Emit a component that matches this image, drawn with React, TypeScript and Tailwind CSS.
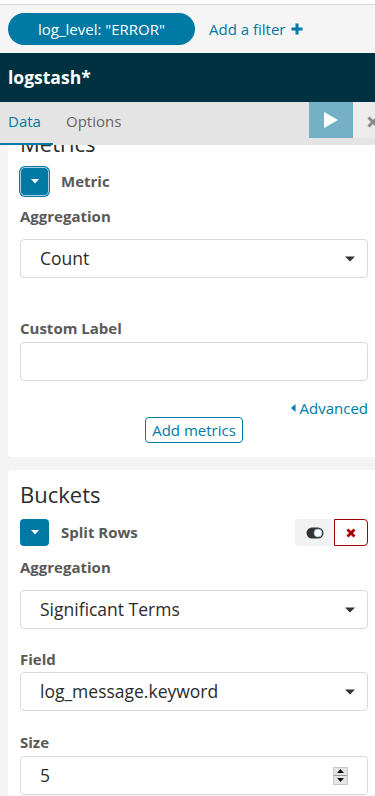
import React from "react";

const Caret = ({ color = "#ffffff" }: { color?: string }) => (
  <svg width="10" height="6" viewBox="0 0 10 6">
    <polygon points="0,0.5 10,0.5 5,5.5" fill={color} />
  </svg>
);

const SelectBox = ({ value }: { value: string }) => (
  <div className="h-[39px] w-[348px] rounded-[4px] border border-[#d9d9d9] bg-white flex items-center pl-[19px] pr-[12px]">
    <span className="flex-1 text-[17.5px] text-[#2b2b2b]">{value}</span>
    <Caret color="#333333" />
  </div>
);

const Label = ({ children }: { children: React.ReactNode }) => (
  <div className="h-[20px] leading-[20px] text-[15px] font-bold text-[#595959]">{children}</div>
);

export default function App() {
  return (
    <div className="w-[375px] h-[796px] overflow-hidden bg-[#f4f4f4] font-['Open_Sans',sans-serif] flex flex-col">
      {/* top strip */}
      <div className="h-[5px] bg-white border-b border-[#d9d9d9] shrink-0" />
      {/* filter bar */}
      <div className="h-[48px] bg-[#f5f5f5] flex items-center pl-[8px] shrink-0">
        <div className="h-[32px] w-[187px] rounded-full bg-[#0079a5] text-white text-[15px] flex items-center justify-center">
          log_level: "ERROR"
        </div>
        <div className="ml-[14px] text-[15px] text-[#0079a5] flex items-center gap-[5px]">
          Add a filter
          <svg width="12" height="12" viewBox="0 0 12 12">
            <path d="M6 0.5v11M0.5 6h11" stroke="#0079a5" strokeWidth="3" />
          </svg>
        </div>
      </div>
      {/* index pattern bar */}
      <div className="h-[49px] bg-[#003140] flex items-center pl-[8px] text-white text-[17.5px] font-bold shrink-0">
        logstash*
      </div>
      {/* tabs */}
      <div className="h-[43px] bg-[#e4e4e4] flex shrink-0 relative">
        <div className="w-[53px] h-full flex items-center pl-[8px] text-[15px] text-[#0079a5] border-b-[2px] border-[#0079a5] pb-[2px]">
          Data
        </div>
        <div className="ml-[13px] h-full flex items-center text-[15px] text-[#666666] pb-[4px]">Options</div>
        <div className="flex-1" />
        <div className="self-start h-[36px] w-[44px] bg-[#75b0c6] flex items-center justify-center">
          <svg width="14" height="16" viewBox="0 0 14 16">
            <polygon points="0,0 14,8 0,16" fill="#ffffff" />
          </svg>
        </div>
        <div className="self-start h-[36px] w-[22px] bg-[#ececec] relative overflow-hidden">
          <svg className="absolute left-[14px] top-[14px]" width="12" height="12" viewBox="0 0 12 12">
            <path d="M1.5 1.5l9 9M10.5 1.5l-9 9" stroke="#888888" strokeWidth="3" />
          </svg>
        </div>
      </div>
      {/* content */}
      <div className="flex-1 overflow-hidden pl-[8px] flex flex-col">
        {/* metrics panel */}
        <div className="bg-white rounded-bl-[4px] pl-[12px] pb-[14px] flex flex-col shrink-0">
          <div className="-mt-[15px] text-[22px] leading-[26px] text-[#2b2b2b]">Metrics</div>
          <div className="mt-[10px] h-[31px] flex items-center">
            <div className="-ml-[1px] w-[31px] h-[31px] rounded-[6px] bg-[#0079a5] p-[1px]">
              <div className="w-full h-full rounded-[5px] border border-[#a9d0e2] bg-[#0079a5] flex items-center justify-center">
                <svg width="8" height="5" viewBox="0 0 8 5">
                  <polygon points="0,0 8,0 4,4.5" fill="#ffffff" />
                </svg>
              </div>
            </div>
            <div className="ml-[11px] text-[15px] font-bold text-[#595959]">Metric</div>
          </div>
          <div className="mt-[9px]">
            <Label>Aggregation</Label>
          </div>
          <div className="mt-[13px]">
            <SelectBox value="Count" />
          </div>
          <div className="mt-[40px]">
            <Label>Custom Label</Label>
          </div>
          <div className="mt-[4px] h-[39px] w-[348px] rounded-[4px] border border-[#d9d9d9] bg-white" />
          <div className="mt-[17px] h-[19px] w-[348px] flex items-center justify-end text-[15px] leading-[20px] text-[#0079a5]">
            <svg width="5" height="8" viewBox="0 0 5 8" className="mr-[4px]">
              <polygon points="4.5,0 4.5,8 0,4" fill="#0079a5" />
            </svg>
            Advanced
          </div>
          <div className="w-[348px] flex justify-center">
            <div className="h-[26px] w-[98px] rounded-[4px] border border-[#0079a5] flex items-center justify-center text-[15px] text-[#0079a5]">
              Add metrics
            </div>
          </div>
        </div>
        {/* buckets panel */}
        <div className="mt-[13px] bg-white rounded-tl-[4px] pl-[12px] pt-[11px] flex flex-col shrink-0">
          <div className="text-[22px] leading-[26px] text-[#2b2b2b]">Buckets</div>
          <div className="mt-[12px] h-[27px] w-[348px] flex items-center">
            <div className="w-[29px] h-[27px] rounded-[4px] bg-[#0079a5] flex items-center justify-center">
              <svg width="8" height="5" viewBox="0 0 8 5">
                <polygon points="0,0 8,0 4,4.5" fill="#ffffff" />
              </svg>
            </div>
            <div className="ml-[12px] flex-1 text-[15px] font-bold text-[#595959]">Split Rows</div>
            <div className="h-[27px] w-[39px] rounded-l-[4px] bg-[#f2f2f2] flex items-center justify-center">
              <svg width="18" height="12" viewBox="0 0 18 12">
                <rect x="0.5" y="0.5" width="17" height="11" rx="5.5" fill="#333333" />
                <circle cx="12" cy="6" r="4" fill="#ffffff" stroke="#7fb6d6" strokeWidth="0.8" />
              </svg>
            </div>
            <div className="h-[27px] w-[34px] rounded-r-[4px] border border-[#a30000] bg-white flex items-center justify-center">
              <svg width="10" height="10" viewBox="0 0 10 10">
                <path d="M1.5 1.5l7 7M8.5 1.5l-7 7" stroke="#a30000" strokeWidth="2.8" />
              </svg>
            </div>
          </div>
          <div className="mt-[11px]">
            <Label>Aggregation</Label>
          </div>
          <div className="mt-[13px]">
            <SelectBox value="Significant Terms" />
          </div>
          <div className="mt-[20px]">
            <Label>Field</Label>
          </div>
          <div className="mt-[3px]">
            <SelectBox value="log_message.keyword" />
          </div>
          <div className="mt-[21px]">
            <Label>Size</Label>
          </div>
          <div className="mt-[4px] h-[39px] w-[348px] rounded-[4px] border border-[#d9d9d9] bg-white flex items-center pl-[19px] pr-[19px]">
            <span className="flex-1 text-[17.5px] text-[#2b2b2b]">5</span>
            <div className="w-[15px] h-[18px] bg-[#e6e6e6] flex flex-col border border-[#c8c8c8]">
              <div className="flex-1 flex items-center justify-center border-b border-[#9a9a9a]">
                <svg width="7" height="4" viewBox="0 0 7 4">
                  <polygon points="0,4 7,4 3.5,0" fill="#111111" />
                </svg>
              </div>
              <div className="flex-1 flex items-center justify-center">
                <svg width="7" height="4" viewBox="0 0 7 4">
                  <polygon points="0,0 7,0 3.5,4" fill="#111111" />
                </svg>
              </div>
            </div>
          </div>
        </div>
      </div>
    </div>
  );
}
